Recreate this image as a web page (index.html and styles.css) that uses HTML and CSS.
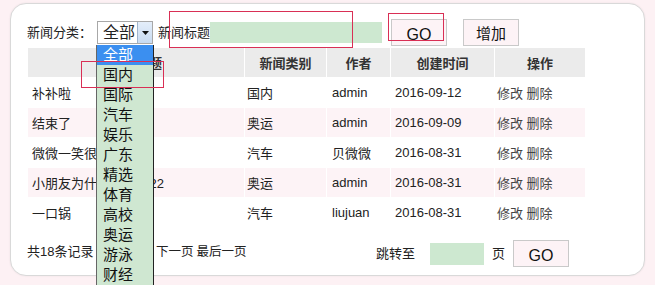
FILE: index.html
```html
<!DOCTYPE html>
<html lang="zh-CN">
<head>
<meta charset="utf-8">
<title>新闻管理</title>
<link rel="stylesheet" href="styles.css">
</head>
<body>
<div class="card">
  <div class="toolbar">
    <span class="label cat-label">新闻分类：</span>
    <div class="select">
      <span class="select-value">全部</span>
      <span class="select-arrow"><svg width="7" height="4" viewBox="0 0 7 4"><path d="M0 0H7L3.5 4Z" fill="#111"/></svg></span>
      <ul class="options">
        <li class="active">全部</li>
        <li>国内</li>
        <li>国际</li>
        <li>汽车</li>
        <li>娱乐</li>
        <li>广东</li>
        <li>精选</li>
        <li>体育</li>
        <li>高校</li>
        <li>奥运</li>
        <li>游泳</li>
        <li>财经</li>
      </ul>
    </div>
    <span class="label title-label">新闻标题</span>
    <span class="input title-input"></span>
    <button class="btn go">GO</button>
    <button class="btn add">增加</button>
  </div>
  <table class="news">
    <thead>
      <tr>
        <th class="c-title">新闻标题</th>
        <th class="c-type">新闻类别</th>
        <th class="c-author">作者</th>
        <th class="c-date">创建时间</th>
        <th class="c-op">操作</th>
      </tr>
    </thead>
    <tbody>
      <tr><td class="c-title">补补啦</td><td class="c-type">国内</td><td class="c-author">admin</td><td class="c-date">2016-09-12</td><td class="c-op">修改 删除</td></tr>
      <tr class="alt"><td class="c-title">结束了</td><td class="c-type">奥运</td><td class="c-author">admin</td><td class="c-date">2016-09-09</td><td class="c-op">修改 删除</td></tr>
      <tr><td class="c-title">微微一笑很倾城</td><td class="c-type">汽车</td><td class="c-author">贝微微</td><td class="c-date">2016-08-31</td><td class="c-op">修改 删除</td></tr>
      <tr class="alt"><td class="c-title">小朋友为什么哭了1122</td><td class="c-type">奥运</td><td class="c-author">admin</td><td class="c-date">2016-08-31</td><td class="c-op">修改 删除</td></tr>
      <tr><td class="c-title">一口锅</td><td class="c-type">汽车</td><td class="c-author">liujuan</td><td class="c-date">2016-08-31</td><td class="c-op">修改 删除</td></tr>
    </tbody>
  </table>
  <div class="footer">
    <div class="pager">
      <span class="count">共18条记录</span>
      <span class="link">上一页</span>
      <span class="link">下一页</span>
      <span class="link">最后一页</span>
    </div>
    <div class="jump">
      <span class="label">跳转至</span>
      <span class="input page-input"></span>
      <span class="label">页</span>
      <button class="btn go2">GO</button>
    </div>
  </div>
  <div class="mark mark-title"></div>
  <div class="mark mark-go"></div>
  <div class="mark mark-option"></div>
</div>
</body>
</html>
```
FILE: styles.css
```css
html, body {
  margin: 0;
  padding: 0;
  height: 285px;
  overflow: hidden;
}
body {
  background: #fdf1f4;
  font-family: "Liberation Sans", "Noto Sans CJK SC", sans-serif;
  font-size: 13px;
  color: #222;
}
.card {
  position: relative;
  box-sizing: border-box;
  margin: 3px 0 0 10px;
  width: 635px;
  height: 273px;
  background: #fff;
  border: 1px solid #d9d9d9;
  border-radius: 16px;
  box-shadow: 0 0 2px rgba(0,0,0,0.08);
  padding: 15px 0 0 16px;
}
.toolbar {
  display: flex;
  align-items: center;
  height: 27px;
}
.label {
  line-height: 16px;
  white-space: nowrap;
}
.cat-label {
  width: 70px;
}
.select {
  position: relative;
  box-sizing: border-box;
  width: 56px;
  height: 23px;
  border: 1px solid #a8a8a8;
  background: #fff;
  display: flex;
  align-items: center;
}
.select-value {
  font-size: 16px;
  line-height: 20px;
  padding-left: 5px;
  flex: 1;
}
.select-arrow {
  box-sizing: border-box;
  width: 15px;
  height: 21px;
  border-left: 1px solid #9fb4cc;
  background: linear-gradient(#e4eefa, #c8dbf1);
  display: flex;
  align-items: center;
  justify-content: center;
}
.options {
  position: absolute;
  left: -2px;
  top: 23px;
  width: 58px;
  box-sizing: border-box;
  margin: 0;
  padding: 0;
  list-style: none;
  background: #cfe7d1;
  border-left: 1px solid #666;
  border-right: 1px solid #222;
  z-index: 5;
}
.options li {
  height: 20px;
  line-height: 20px;
  font-size: 15px;
  padding-left: 6px;
  color: #111;
}
.options li.active {
  background: #3b8ff0;
  color: #fff;
}
.title-label {
  margin-left: 5px;
}
.input {
  display: block;
  background: #cde8d0;
}
.title-input {
  width: 172px;
  height: 21px;
}
.btn {
  box-sizing: border-box;
  height: 27px;
  width: 56px;
  padding: 0;
  border: 1px solid #c9c9c9;
  background: #fdf3f6;
  font-family: "Liberation Sans", "Noto Sans CJK SC", sans-serif;
  color: #111;
}
.go {
  margin-left: 9px;
  font-size: 16px;
  padding-top: 5px;
}
.add {
  margin-left: 16px;
  font-size: 15px;
}
.news {
  margin-top: 1px;
  border-collapse: collapse;
  border: 1px solid #cfcfcf;
  table-layout: fixed;
}
.news th, .news td {
  border: 1px solid #fff;
  padding: 0;
  height: 29px;
  white-space: nowrap;
  overflow: hidden;
}
.news th {
  background: #ebebeb;
  font-weight: bold;
  text-align: center;
  color: #333;
}
.news td {
  text-align: left;
}
.news tr.alt td {
  background: #fdf3f6;
}
.news th.c-title { width: 216px; }
.news th.c-type { width: 81px; }
.news th.c-author { width: 63px; }
.news th.c-date { width: 103px; }
.news th.c-op { width: 90px; }
.news td.c-title { padding-left: 4px; }
.news td.c-type { padding-left: 2px; }
.news td.c-author { padding-left: 5px; }
.news td.c-date { padding-left: 4px; }
.news td.c-op { padding-left: 2px; color: #444; }
.footer {
  display: flex;
  align-items: flex-start;
  margin-top: 12px;
  width: 559px;
}
.pager {
  display: flex;
  align-items: baseline;
  gap: 3px;
  margin-top: 4px;
  line-height: 16px;
}
.pager .link {
  font-size: 12.5px;
}
.pager .link:nth-child(2) {
  margin-left: 14px;
  margin-right: 5px;
}
.jump {
  margin-left: auto;
  margin-right: 17px;
  display: flex;
  align-items: center;
}
.page-input {
  width: 54px;
  height: 22px;
  margin-left: 15px;
  margin-right: 8px;
}
.go2 {
  margin-left: 8px;
  font-size: 16px;
  padding-top: 5px;
}
.mark {
  position: absolute;
  box-sizing: border-box;
  border: 1px solid #d92f55;
  z-index: 10;
}
.mark-title {
  left: 158px;
  top: 7px;
  width: 184px;
  height: 37px;
}
.mark-go {
  left: 377px;
  top: 9px;
  width: 56px;
  height: 28px;
}
.mark-option {
  left: 70px;
  top: 57px;
  width: 83px;
  height: 27px;
}
```
